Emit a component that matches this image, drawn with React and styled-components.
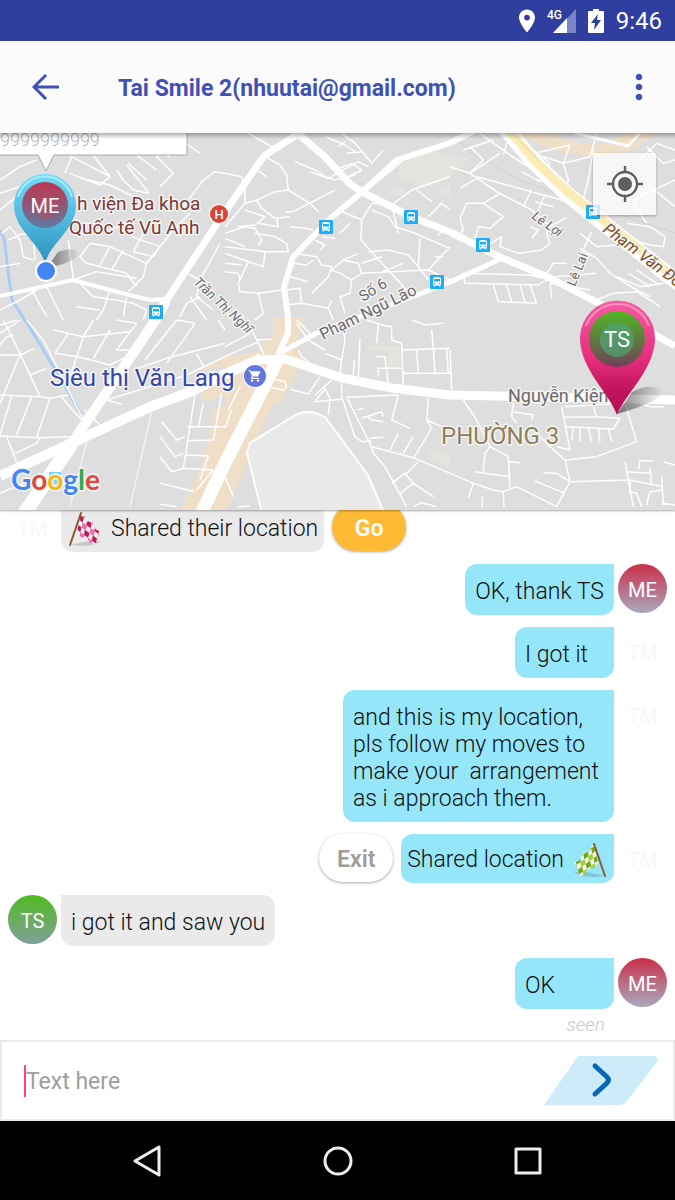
import styled, { createGlobalStyle, css } from "styled-components";
import { MdMoreVert, MdDirectionsBus, MdShoppingCart } from "react-icons/md";

const GlobalStyle = createGlobalStyle`
    * {
        box-sizing: border-box;
    }
    body {
        margin: 0;
        background: white;
        font-family: Roboto, "Liberation Sans", sans-serif;
    }
    button {
        font-family: inherit;
        border: none;
        padding: 0;
        cursor: pointer;
    }
`

// road geometry is stored per tile, three units to a map pixel
const tiles = [
    {
        x: 0, y: 130,
        roads: "M95 75L140 20L155 0 M165 20L215 80L195 130 M215 80L330 140L300 165L210 130 M330 140L260 50L240 20 M230 70L300 20L330 10 M350 30L470 120 M360 10L510 80 M385 100L440 150 M380 105L440 180L445 190L400 180L370 150L350 120 M240 145L330 165L400 200 M470 80L545 30L560 10 M470 80L520 130L480 170 M545 30L600 70 M610 150L645 125L675 130 M610 150L550 230 M0 150L60 110L110 90 M0 190L60 170 M0 240L50 200 M5 310L30 290L60 330L70 380L100 390 M25 330L70 310L100 320 M0 410L60 400 M100 330L105 390 M205 330L220 450 M270 340L240 380L260 400L380 430L410 470 M270 340L330 350L440 400L430 440L385 485 M330 350L300 405 M370 360L335 420 M395 320L480 350L460 380L400 365 M430 310L400 365 M480 350L520 300L570 250 M440 400L480 350 M260 280L400 300 M220 450L290 425L410 445 M0 540L60 510L110 480 M90 470L140 560 M140 470L190 570 M240 460L280 500L350 510L400 520 M330 480L310 540L290 570 M230 530L300 540 M380 500L370 560 M400 520L440 540L430 570 M540 560L560 520L600 500 M560 430L600 450L590 500L640 540 M600 450L660 340 M570 500L620 570"
    },
    {
        x: 225, y: 130,
        roads: "M70 10L140 50 M140 50L230 15 M95 120L125 140 M120 80L165 105L185 135L190 180L150 185L95 210L60 220L0 290 M60 170L60 220 M0 130L50 140L60 170 M190 180L255 220L280 245 M180 245L205 245L330 180 M210 95L270 120L300 140L330 150L390 135 M255 125L310 145L345 125L400 95L430 110 M350 10L390 40L420 75L440 100L475 60 M300 20L360 45L390 65 M340 50L360 35 M365 70L415 65 M330 120L380 100L410 120L370 140 M415 190L530 95 M340 240L410 270L440 220 M410 270L408 330L480 410L545 480 M440 220L500 225L560 180L675 140 M440 240L490 260L510 290L570 310L675 355 M500 225L520 310 M575 180L620 215 M610 260L650 220L675 240 M640 315L660 290 M95 210L110 235L150 265L195 260 M60 240L120 260L90 285L40 290 M0 310L60 290L90 295L110 330L100 345 M100 280L160 290L155 265 M90 310L150 320L185 340L190 365L120 365L0 350 M0 325L60 350 M120 365L115 410L70 395L0 370 M70 395L40 460L45 485L100 490L170 480 M0 400L50 405 M40 430L45 450 M0 425L40 430 M195 290L240 295L265 300 M290 320L330 325 M270 330L300 345L285 360 M345 310L375 280 M205 370L275 380L290 405L320 410L310 440L260 490 M205 400L245 405L265 390 M195 440L250 455 M180 480L225 475L230 520L185 525 M230 520L310 535L325 570 M310 535L320 510 M345 430L320 420L355 390L400 370 M345 430L380 450L410 430L400 400L355 390 M380 450L375 490L345 500L360 550 M410 430L500 425L610 420L675 350 M430 365L490 360L550 375L580 410 M410 400L470 380 M460 430L535 400 M585 325L580 410L610 450 M630 380L655 380 M100 490L115 550L90 570 M0 550L60 560 M610 420L675 450"
    },
    {
        x: 450, y: 130,
        roads: "M90 10L180 75L250 120L310 160L340 200 M160 75L170 40 M215 125L270 155L300 100L250 60 M0 110L60 130L140 185L245 240L300 290 M60 130L100 90L60 50 M60 130L150 70 M30 175L80 145 M80 140L300 200L390 225 M150 190L100 220L50 220L30 265L40 300L20 325 M100 220L160 260L120 295L85 290L75 325 M40 60L130 30 M115 345L155 320L150 350L205 370L275 360L300 340L290 310L300 290L350 262 M245 180L220 230 M285 195L265 240 M240 290L265 300L245 325 M255 215L310 230 M360 45L340 100L355 150L345 200 M280 80L340 100L420 80L440 10 M255 70L360 45 M395 225L415 150L430 60 M390 310L440 350L500 345L550 330L600 345L640 350L645 320L600 290L530 280 M390 355L440 385L480 430L560 480L600 500 M425 305L390 380 M290 430L310 400L350 400 M270 460L320 440L440 430 M300 460L420 480 M500 440L570 470L640 460 M535 430L600 470 M560 420L620 460 M600 420L650 460 M40 430L240 435L300 450 M40 430L45 460L270 465 M130 465L145 515L260 520L240 465 M170 465L185 515 M210 465L225 515 M300 460L305 505 M440 510L490 490L560 485L600 510L630 530 M580 190L550 220L590 280 M590 160L675 230 M550 210L675 150 M560 100L620 40L675 60 M590 50L640 100L675 90"
    },
    {
        x: 0, y: 320,
        roads: "M0 15L50 0 M10 0L60 100L120 230L150 235L205 225 M0 40L60 0 M0 75L20 50L40 45 M0 105L60 105L105 85 M60 105L0 250 M90 165L140 145 M0 225L120 230 M35 230L0 345 M95 230L50 345 M150 235L110 350 M0 348L120 353L215 350 M20 350L55 440 M45 400L110 370L120 353 M80 0L130 60L250 300 M160 30L250 50L280 0 M205 40L165 100 M250 50L390 35 M165 100L235 110L330 135L400 100 M250 50L230 110L210 170 M330 30L280 115 M410 10L350 90L390 90 M410 10L350 0 M530 0L435 120 M585 10L500 130 M530 0L585 10 M400 150L500 115L675 70 M320 240L400 215L560 165L675 110 M590 100L610 140 M320 240L365 253 M255 270L300 315 M245 300L200 250L180 225 M0 520L70 490 M485 305L530 360L555 350 M480 350L525 410L550 400 M480 410L515 455L550 445 M585 225L550 445L640 450 M560 320L675 320 M610 250L595 320 M665 220L640 360L560 362 M555 405L625 408L600 480 M480 490L585 515 M480 553L530 560 M640 450L590 510 M655 0L675 30",
        faint: "M455 275L390 560 M260 365L210 560"
    },
    {
        x: 225, y: 320,
        roads: "M0 80L75 40 M0 110L100 65 M75 20L120 110 M95 60L140 58 M215 10L250 60L300 90 M215 0L265 50 M220 90L230 110L250 125 M300 100L350 120L360 60L350 0 M405 55L400 170 M388 120L385 165 M350 120L345 160 M425 0L470 15L500 20L500 60L530 70L535 205 M460 10L455 70 M560 0L600 15L655 10 M530 90L675 85 M575 90L580 160 M620 30L625 85L630 160 M665 85L670 160 M535 160L675 160 M455 110L480 110L490 195 M460 170L460 145L530 145 M270 225L320 180 M270 245L300 205L315 235L310 285 M270 245L350 238 M350 190L350 230L390 350L410 365L440 362 M365 232L520 225L500 300L555 325 M365 232L435 370L445 400L480 440L545 560 M395 270L415 265 M410 295L470 275L475 290 M430 290L440 300L475 305 M435 355L475 352 M440 380L570 415L675 460 M520 340L495 390 M565 350L535 400 M610 235L605 300L620 325L565 415 M605 300L650 320 M500 490L540 460L565 490L525 520 M580 425L540 465 M565 490L625 530 M565 560L590 548L635 560 M195 208L250 222L285 170 M135 175L180 185L185 200L175 210L130 200 M10 270L45 200 M0 325L20 270 M0 470L25 530 M40 560L75 558"
    },
    {
        x: 450, y: 280,
        roads: "M0 210L5 330 M40 360L80 420L120 500L175 530L180 630 M100 575L105 520L120 500 M175 545L210 548 M75 575L180 590 M0 580L70 610L130 630L160 635L200 620L320 680 M70 610L55 655 M97 650L97 682 M160 635L162 682 M320 680L360 605L345 540L440 530L560 485L525 370 M345 540L290 490L270 470 M360 605L320 580L280 578 M345 640L255 603 M360 605L540 600L640 620 M190 370L185 410L200 430 M190 395L250 405L245 420 M335 380L360 510 M345 412L440 410L510 415L490 447L350 440 M430 380L440 410 M345 380L520 370 M370 440L365 480 M390 445L390 485 M415 445L425 485 M445 445L450 485 M475 445L485 485 M320 500L360 510 M525 545L550 680 M530 575L600 580 M565 570L570 542L610 542 M600 565L605 615 M540 600L540 640 M540 635L560 640L575 680 M635 590L640 675 M590 675L600 635L640 630 M640 545L675 555 M635 670L675 675 M570 370L600 380L640 380"
    }
]

const mainRoads = [
    { d: "M0 296L73 280L110 290L150 300L165 299", w: 4 },
    { d: "M24 514L72 443", w: 14 },
    { d: "M72 443L155 321L166 301", w: 10 },
    { d: "M166 301L218 222L264 156L298 134", w: 7 },
    { d: "M0 476L72 443L150 407L190 392L225 374L262 358", w: 10 },
    { d: "M262 360L285 359L342 378L392 388L450 395L675 400", w: 9 },
    { d: "M277 361L225 463L201 514", w: 13 },
    { d: "M278 355L288 333L288 317L284 287L293 257L332 217L362 192L397 160L450 143L476 130", w: 6 },
    { d: "M296 132L325 157L350 184L362 192L412 217L450 232L500 257L550 278L600 304L675 346", w: 7 },
    { d: "M278 354L317 333L412 297L450 282L505 257", w: 5 },
    { d: "M575 133L628 146L640 133", w: 3 },
]

const busStops = [[326, 227], [411, 217], [483, 245], [437, 282], [156, 312], [593, 212]]

const areaLabels = [
    { x: 77, y: 210, size: 19, fill: "#7c3a35", text: "h viện Đa khoa" },
    { x: 69, y: 234, size: 19, fill: "#7c3a35", text: "Quốc tế Vũ Anh" },
    { x: 50, y: 386, size: 24, fill: "#3544a8", text: "Siêu thị Văn Lang" },
    { x: 441, y: 444, size: 24, fill: "#8d7f5b", text: "PHƯỜNG 3" },
    { x: 508, y: 402, size: 18, fill: "#6b6b6b", text: "Nguyễn Kiện" },
    { x: 193, y: 283, size: 13, fill: "#6b6b6b", text: "Trần Thị Nghĩ", turn: 43, italic: true },
    { x: 363, y: 302, size: 15, fill: "#6b6b6b", text: "Số 6", turn: -32 },
    { x: 323, y: 340, size: 16, fill: "#6b6b6b", text: "Phạm Ngũ Lão", turn: -26 },
    { x: 531, y: 218, size: 13, fill: "#6b6b6b", text: "Lê Lợi", turn: 35, italic: true },
    { x: 575, y: 287, size: 13, fill: "#6b6b6b", text: "Lê Lai", turn: -68 },
    { x: 602, y: 231, size: 16, fill: "#7b4c1e", text: "Phạm Văn Đồng", turn: 37, italic: true },
]

const MapDrawing = () => (
    <MapSvg viewBox="0 133 675 377" preserveAspectRatio="xMidYMid slice" role="img" aria-label="Map">
        <defs>
            <linearGradient id="bluePin" x1="0" y1="0" x2="0" y2="1">
                <stop offset="0" stopColor="#6fdcf6"/>
                <stop offset="0.5" stopColor="#51b9dd"/>
                <stop offset="1" stopColor="#2b91bd"/>
            </linearGradient>
            <linearGradient id="pinkPin" x1="0" y1="0" x2="0" y2="1">
                <stop offset="0" stopColor="#f75ca3"/>
                <stop offset="0.5" stopColor="#e62f7c"/>
                <stop offset="0.8" stopColor="#bf125b"/>
                <stop offset="1" stopColor="#b50f54"/>
            </linearGradient>
            <linearGradient id="meFace" x1="0" y1="0" x2="0" y2="1">
                <stop offset="0" stopColor="#c0364f"/>
                <stop offset="1" stopColor="#5c7ba0"/>
            </linearGradient>
            <linearGradient id="tsFace" x1="0" y1="0" x2="0" y2="1">
                <stop offset="0" stopColor="#50b723"/>
                <stop offset="1" stopColor="#70405a"/>
            </linearGradient>
            <linearGradient id="topShade" x1="0" y1="0" x2="0" y2="1">
                <stop offset="0" stopColor="#000" stopOpacity="0.3"/>
                <stop offset="1" stopColor="#000" stopOpacity="0"/>
            </linearGradient>
            <linearGradient id="pinShadow" x1="0" y1="0" x2="1" y2="0">
                <stop offset="0" stopColor="#000" stopOpacity="0.5"/>
                <stop offset="1" stopColor="#000" stopOpacity="0"/>
            </linearGradient>
        </defs>
        <rect y="133" width="675" height="377" fill="#dedede"/>
        <path d="M398 177L400 163L425 150L450 155L467 158L463 165L450 177L425 188ZM388 192L394 186L405 190L400 197ZM436 190L450 184L450 197ZM366 346L400 346L400 368L388 366L388 351L366 351ZM432 448L450 455L450 468L428 458Z" fill="#e3e4dd"/>
        <path d="M516 133L534 142L566 153L600 157L630 151L657 133L625 133L612 142L590 145L560 139L550 133Z" fill="#efdfc8"/>
        <path d="M273 317L305 317L297 337L300 360L297 373L280 403L273 405L258 435L247 447L247 463L225 513L180 513L200 470L210 430L213 410L226 404L226 395L205 401L200 393L225 366L191 372L225 357L258 352L273 335Z" fill="#efdfc8"/>
        <path d="M262 513L247 453L250 443L292 417Q307 407 325 417L368 475L384 513Z" fill="#e9e9e9" stroke="white" strokeWidth="2"/>
        <path d="M0 230L4 238L8 270L12 300L30 328L56 371L81 414" fill="none" stroke="#a9ccf5" strokeWidth="3"/>
        <path d="M450 133L470 152L520 180L590 205L675 233" fill="none" stroke="#d0d0d0" strokeWidth="1"/>
        {tiles.map((tile) => (
            <g key={`${tile.x}-${tile.y}`} transform={`translate(${tile.x} ${tile.y}) scale(0.33333)`} fill="none" stroke="white" strokeLinejoin="round">
                <path d={tile.roads} strokeWidth="4.5"/>
                {tile.faint && <path d={tile.faint} strokeWidth="5" stroke="#f1f1f1"/>}
            </g>
        ))}
        <g fill="none" stroke="white" strokeLinejoin="round">
            {mainRoads.map((road) => <path key={road.d} d={road.d} strokeWidth={road.w}/>)}
            <path d="M505 128L535 163L567 194L597 218L680 284" strokeWidth="16"/>
            <path d="M507 128L537 163L568 192L598 216L680 282" strokeWidth="9" stroke="#fcedb8"/>
            <path d="M512 133L540 162" strokeWidth="1" stroke="#ddd0a0"/>
        </g>

        {busStops.map(([x, y]) => (
            <g key={`${x}-${y}`} transform={`translate(${x - 7} ${y - 7})`}>
                <rect width="14" height="14" rx="1" fill="#1badf5"/>
                <MdDirectionsBus x="1" y="1" size={12} color="white"/>
            </g>
        ))}

        <path d="M617 414L632 392Q650 382 664 391Q660 402 617 414Z" fill="url(#pinShadow)"/>
        <path d="M47 268L58 252Q72 246 80 253Q76 262 47 268Z" fill="url(#pinShadow)"/>

        {areaLabels.map((label) => (
            <MapLabel
                key={label.text}
                transform={`translate(${label.x} ${label.y}) rotate(${label.turn || 0})`}
                fontSize={label.size}
                fill={label.fill}
                fontStyle={label.italic ? "italic" : "normal"}
            >
                {label.text}
            </MapLabel>
        ))}

        <circle cx="219" cy="214" r="10" fill="white"/>
        <circle cx="219" cy="214" r="9" fill="#d8443a"/>
        <PinText x="219" y="219" fontSize="13" fontWeight="500">H</PinText>
        <circle cx="255" cy="376" r="12" fill="white"/>
        <circle cx="255" cy="376" r="11" fill="#6577dd"/>
        <MdShoppingCart x="248" y="369" size={14} color="white"/>

        <rect x="49" y="472" width="12" height="12" fill="#7fd4f5"/>
        <GoogleText x="11" y="490" fontSize="28">
            <tspan fill="#4285f4">G</tspan>
            <tspan fill="#dd4b3e">o</tspan>
            <tspan fill="#f4b912">o</tspan>
            <tspan fill="#4285f4">g</tspan>
            <tspan fill="#34a853">l</tspan>
            <tspan fill="#dd4b3e">e</tspan>
        </GoogleText>

        <path d="M-2 130H187V155H54L46 171L38 155H-2Z" fill="white" stroke="#a8a8a8" strokeWidth="1"/>
        <text x="0" y="146" fontSize="18" fill="#b5b5b5" fontWeight="300">9999999999</text>

        <path d="M45 264C41 244 14 230 14 205A31 31 0 0 1 76 205C76 230 49 244 45 264Z" fill="url(#bluePin)"/>
        <path d="M18 197A28 28 0 0 1 72 197" fill="none" stroke="#a5ecfb" strokeWidth="2"/>
        <circle cx="45" cy="205" r="23" fill="url(#meFace)"/>
        <circle cx="47" cy="207" r="12" fill="#c84458" opacity="0.4"/>
        <PinText x="45" y="213" fontSize="20">ME</PinText>
        <circle cx="46" cy="271" r="11" fill="white"/>
        <circle cx="46" cy="271" r="9" fill="#4285f4"/>

        <path d="M617 415C610 394 580 369 580 338A37.5 37.5 0 0 1 655 338C655 369 625 394 617 415Z" fill="url(#pinkPin)"/>
        <path d="M586 326A33.5 33.5 0 0 1 649 326" fill="none" stroke="#fb93c2" strokeWidth="2"/>
        <circle cx="617" cy="339" r="28" fill="url(#tsFace)"/>
        <circle cx="617" cy="340" r="17" fill="#4fa578" opacity="0.7"/>
        <PinText x="617" y="347" fontSize="22">TS</PinText>

        <rect y="133" width="675" height="6" fill="url(#topShade)"/>
    </MapSvg>
)

const Flag = ({ id, colors, flipped }) => (
    <svg width="36" height="36" viewBox="0 0 36 36" aria-hidden="true">
        <defs>
            <pattern id={id} width="9" height="10" patternUnits="userSpaceOnUse" patternTransform="rotate(14) skewY(22)">
                <rect width="9" height="10" fill="#f6f2f2"/>
                <rect width="5" height="5" fill={colors[0]}/>
                <rect x="4" y="5" width="5" height="5" fill={colors[1]}/>
            </pattern>
        </defs>
        <g transform={flipped ? "translate(36 0) scale(-1 1)" : undefined}>
            <path d="M3 34L22 30L34 30L28 34L14 35Z" fill="#000" opacity="0.15"/>
            <path d="M14 3L18 5L18 11L25 10L28 18L34 21L30 27L29 34L24 33L20 27L14 26L10 21Z" fill={`url(#${id})`}/>
            <path d="M14 2L3 34" stroke="#8a5a2b" strokeWidth="2" strokeLinecap="round"/>
        </g>
    </svg>
)

const messages = [
    { id: 1, from: "them", avatar: "TM", text: "Shared their location", flag: "pink", action: "Go" },
    { id: 2, from: "me", avatar: "ME", text: "OK, thank TS" },
    { id: 3, from: "me", avatar: "TM", text: "I got it" },
    { id: 4, from: "me", avatar: "TM", text: "and this is my location, pls follow my moves to make your  arrangement as i approach them." },
    { id: 5, from: "me", avatar: "TM", text: "Shared location", flag: "green", action: "Exit" },
    { id: 6, from: "them", avatar: "TS", text: "i got it and saw you" },
    { id: 7, from: "me", avatar: "ME", text: "OK" },
]

const Message = ({ message }) => {
    const mine = message.from === "me"

    return (
        <MessageRow $mine={mine}>
            <Avatar $who={message.avatar}>{message.avatar}</Avatar>
            <Bubble $mine={mine} $shared={!!message.flag}>
                {message.flag === "pink" && <Flag id="pinkFlag" colors={["#e573ab", "#c2185b"]}/>}
                <span>{message.text}</span>
                {message.flag === "green" && <Flag id="greenFlag" colors={["#a4cf3a", "#74a81c"]} flipped/>}
            </Bubble>
            {message.action && <ActionButton $primary={message.action === "Go"}>{message.action}</ActionButton>}
        </MessageRow>
    )
}

const App = () => {
    return (
        <Screen>
            <GlobalStyle/>
            <StatusBar>
                <svg width="16" height="24" viewBox="5 2 14 20" fill="currentColor" aria-label="Location on">
                    <path d="M12 2C8.13 2 5 5.13 5 9c0 5.25 7 13 7 13s7-7.75 7-13c0-3.87-3.13-7-7-7zm0 9.5a2.5 2.5 0 0 1 0-5 2.5 2.5 0 0 1 0 5z"/>
                </svg>
                <svg width="29" height="24" viewBox="0 0 29 24" aria-label="4G signal">
                    <path d="M29 0V24H6Z" fill="#7a84c6"/>
                    <path d="M20 9V24H6Z" fill="white"/>
                    <text x="0" y="10" fontSize="12" fontWeight="500" fill="white">4G</text>
                </svg>
                <svg width="16" height="24" viewBox="0 0 16 24" aria-label="Battery charging">
                    <path d="M5 0H11V2H15Q16 2 16 3V23Q16 24 15 24H1Q0 24 0 23V3Q0 2 1 2H5Z" fill="white"/>
                    <path d="M10 5L3 14H7L6 21L13 11H9Z" fill="#303f9f"/>
                </svg>
                <Clock>9:46</Clock>
            </StatusBar>

            <Toolbar>
                <IconButton aria-label="Back">
                    <svg width="28" height="28" viewBox="0 0 28 28" fill="none" stroke="currentColor" strokeWidth="3">
                        <path d="M27 14H3M14 2L2 14L14 26"/>
                    </svg>
                </IconButton>
                <Title>Tai Smile 2(nhuutai@gmail.com)</Title>
                <IconButton aria-label="More options"><MdMoreVert size={40}/></IconButton>
            </Toolbar>

            <MapPanel>
                <MapDrawing/>
                <LocateButton aria-label="My location">
                    <svg width="36" height="36" viewBox="0 0 36 36" fill="none" stroke="currentColor" strokeWidth="2.4">
                        <circle cx="18" cy="18" r="12"/>
                        <circle cx="18" cy="18" r="7" fill="currentColor" stroke="none"/>
                        <path d="M18 0V6M18 30V36M0 18H6M30 18H36"/>
                    </svg>
                </LocateButton>
            </MapPanel>

            <Chat>
                {messages.map((message) => <Message key={message.id} message={message}/>)}
                <Seen>seen</Seen>
            </Chat>

            <Composer onSubmit={(ev) => ev.preventDefault()}>
                <Caret/>
                <TextInput type="text" aria-label="Message" placeholder="Text here"/>
                <SendButton type="submit" aria-label="Send">
                    <svg width="114" height="50" viewBox="0 0 114 50">
                        <path d="M34 0H110Q115 1 113 6L83 45Q80 49 75 49H0Z" fill="#cdebf8"/>
                        <path d="M51 10L63 21Q66 24 63 27L51 38" fill="none" stroke="#0468b4" strokeWidth="5" strokeLinecap="round"/>
                    </svg>
                </SendButton>
            </Composer>

            <NavBar>
                <NavButton aria-label="Back">
                    <svg width="32" height="32" viewBox="0 0 32 32"><path d="M27 2V30L3 16Z"/></svg>
                </NavButton>
                <NavButton aria-label="Home">
                    <svg width="32" height="32" viewBox="0 0 32 32"><circle cx="16" cy="16" r="13"/></svg>
                </NavButton>
                <NavButton aria-label="Recent apps">
                    <svg width="32" height="32" viewBox="0 0 32 32"><rect x="4" y="4" width="24" height="24"/></svg>
                </NavButton>
            </NavBar>
        </Screen>
    )
}

const Screen = styled.div`
    display: flex;
    flex-direction: column;
    height: 100vh;
`
const StatusBar = styled.header`
    display: flex;
    flex: none;
    align-items: center;
    justify-content: flex-end;
    gap: 12px;
    height: 41px;
    padding-right: 13px;
    background: #303f9f;
    color: white;
`
const Clock = styled.time`
    font-size: 24px;
`
const Toolbar = styled.nav`
    display: flex;
    flex: none;
    align-items: center;
    height: 92px;
    padding: 0 16px 0 32px;
    background: #fbfbfb;
    color: #3f51b5;
`
const IconButton = styled.button`
    display: flex;
    background: none;
    color: inherit;
`
const Title = styled.h1`
    flex: 1;
    margin: 0;
    padding: 2px 0 0 58px;
    font-size: 23px;
    font-weight: 700;
`
const MapPanel = styled.section`
    position: relative;
    flex: none;
    aspect-ratio: 675 / 377;
    box-shadow: 0 1px 2px rgba(0, 0, 0, 0.35);
    z-index: 1;
`
const MapSvg = styled.svg`
    display: block;
    width: 100%;
    height: 100%;
`
const MapLabel = styled.text`
    paint-order: stroke;
    stroke: #f4f4f4;
    stroke-width: 3px;
    stroke-linejoin: round;
`
const GoogleText = styled(MapLabel)`
    font-family: Lato, sans-serif;
    font-weight: 700;
`
const PinText = styled.text`
    fill: white;
    text-anchor: middle;
`
const LocateButton = styled.button`
    position: absolute;
    top: 20px;
    right: 19px;
    display: flex;
    align-items: center;
    justify-content: center;
    width: 63px;
    height: 62px;
    border-radius: 2px;
    background: rgba(255, 255, 255, 0.75);
    box-shadow: 0 1px 3px rgba(0, 0, 0, 0.3);
    color: #5f5f5f;
`
const Chat = styled.main`
    display: flex;
    flex: 1;
    flex-direction: column;
    justify-content: flex-end;
    gap: 12px;
    min-height: 0;
    overflow: hidden;
    padding: 0 8px 4px;
`
const MessageRow = styled.div`
    display: flex;
    flex: none;
    flex-direction: ${props => props.$mine ? "row-reverse" : "row"};
    align-items: flex-start;
    gap: 4px;
`
const avatarColors = {
    ME: "linear-gradient(#cb2f4a, #a9a9bd)",
    TS: "linear-gradient(#50bb20, #819f9a)",
}
const Avatar = styled.span`
    display: flex;
    flex: none;
    align-items: center;
    justify-content: center;
    width: 49px;
    height: 49px;
    padding-top: 2px;
    border-radius: 50%;
    background: ${props => avatarColors[props.$who] || "none"};
    color: ${props => avatarColors[props.$who] ? "white" : "#f7f7f7"};
    font-size: 20px;
`
const Bubble = styled.div`
    min-width: 99px;
    max-width: 271px;
    padding: 14px 10px 10px;
    border-radius: ${props => props.$mine ? "12px 0 12px 12px" : "0 12px 12px 12px"};
    background: ${props => props.$mine ? "#96e6f9" : "#eaeaea"};
    color: #111;
    font-size: 23px;
    font-weight: 300;
    line-height: 27px;
    white-space: pre-wrap;

    ${props => props.$shared && css`
        display: flex;
        align-items: center;
        gap: 8px;
        height: 49px;
        padding: 2px 6px 0;
        white-space: nowrap;
    `}
`
const ActionButton = styled.button`
    width: 74px;
    height: 48px;
    margin: 0 4px;
    padding-top: 2px;
    border-radius: 24px;
    background: ${props => props.$primary ? "#ffba35" : "white"};
    box-shadow: 0 1px 3px rgba(0, 0, 0, 0.35);
    color: ${props => props.$primary ? "white" : "#9e9e9e"};
    font-size: 23px;
    font-weight: 600;
`
const Seen = styled.p`
    flex: none;
    margin: -8px 62px 0;
    color: #c8c8c8;
    font-size: 19px;
    font-style: italic;
    font-weight: 300;
    line-height: 23px;
    text-align: right;
`
const Composer = styled.form`
    display: flex;
    flex: none;
    align-items: center;
    height: 81px;
    padding: 0 15px 0 22px;
    border: 2px solid #ebebeb;
    background: white;
`
const Caret = styled.span`
    width: 2px;
    height: 32px;
    background: #ff4081;
`
const TextInput = styled.input`
    flex: 1;
    min-width: 0;
    padding: 2px 0 0;
    border: none;
    outline: none;
    background: none;
    font-family: inherit;
    font-size: 23px;
    &::placeholder {
        color: #9e9e9e;
    }
`
const SendButton = styled.button`
    display: flex;
    background: none;
`
const NavBar = styled.footer`
    display: flex;
    flex: none;
    justify-content: center;
    align-items: center;
    gap: 158px;
    height: 79px;
    background: black;
`
const NavButton = styled.button`
    display: flex;
    background: none;
    fill: none;
    stroke: #eee;
    stroke-width: 3px;
    stroke-linejoin: round;
`

export default App
